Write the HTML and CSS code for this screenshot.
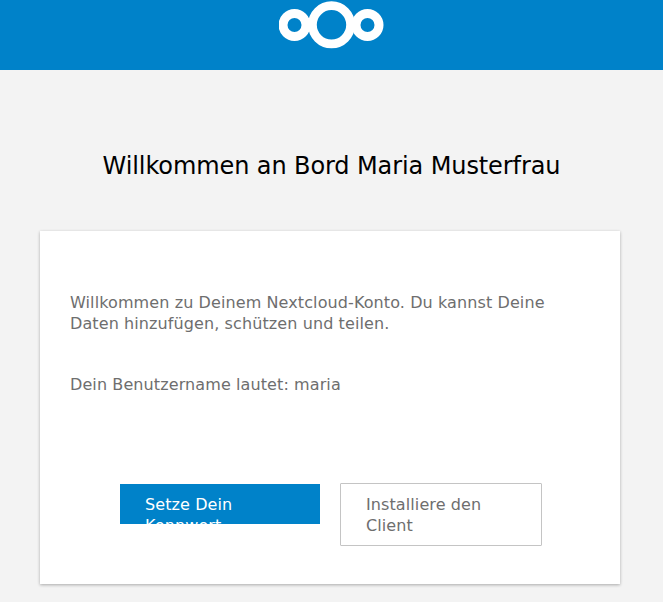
FILE: index.html
```html
<!DOCTYPE html>
<html lang="de">
<head>
    <meta charset="UTF-8">
    <meta name="viewport" content="width=device-width, initial-scale=1.0">
    <title>Willkommen an Bord</title>
    <link rel="stylesheet" href="styles.css">
</head>
<body>
    <header class="topbar">
        <svg class="logo" width="106" height="50" viewBox="0 0 106 50" fill="none" stroke="#fff">
            <circle cx="15.500" cy="25" r="11.500" stroke-width="9"/>
            <circle cx="52.500" cy="24.800" r="19.100" stroke-width="8.800"/>
            <circle cx="88.500" cy="25" r="11.500" stroke-width="9"/>
        </svg>
    </header>

    <h1 class="title">Willkommen an Bord Maria Musterfrau</h1>

    <main class="card">
        <p class="intro">Willkommen zu Deinem Nextcloud-Konto. Du kannst Deine Daten hinzufügen, schützen und teilen.</p>
        <p class="username">Dein Benutzername lautet: maria</p>
        <div class="actions">
            <a class="btn btn-primary" href="#">Setze Dein Kennwort</a>
            <a class="btn btn-secondary" href="#">Installiere den Client</a>
        </div>
    </main>
</body>
</html>
```

FILE: styles.css
```css
html {
    height: 100%;
}
body {
    margin: 0;
    height: 100%;
    overflow: hidden;
    background-color: #f3f3f3;
    font-family: "DejaVu Sans", Verdana, sans-serif;
    font-size: 16px;
    letter-spacing: 0.1px;
    line-height: 21px;
    color: #6e6e6e;
}
.topbar {
    height: 70px;
    background: #0082c9;
    display: flex;
    justify-content: center;
}
.logo {
    display: block;
}
.title {
    margin: 82px 0 51px;
    font-size: 24px;
    letter-spacing: -0.1px;
    line-height: 28px;
    font-weight: normal;
    color: #000;
    text-align: center;
}
.card {
    box-sizing: border-box;
    width: 580px;
    height: 353px;
    margin-left: 40px;
    padding: 61px 30px 0;
    background: #fff;
    box-shadow: 0 1px 3px rgba(0,0,0,0.3);
}
.intro {
    margin: 0 0 40px;
}
.username {
    margin: 0;
}
.actions {
    display: flex;
    gap: 20px;
    margin-top: 88px;
    margin-left: 50px;
    align-items: flex-start;
}
.btn {
    box-sizing: border-box;
    display: block;
    width: 200px;
    text-decoration: none;
}
.btn-primary {
    height: 40px;
    margin-top: 1px;
    padding: 10px 25px 0;
    overflow: hidden;
    background: #0082c9;
    color: #fff;
}
.btn-secondary {
    width: 202px;
    height: 63px;
    padding: 10px 25px;
    background: #fff;
    border: 1px solid #c4c4c4;
    border-radius: 1px;
    color: #6e6e6e;
}
```
